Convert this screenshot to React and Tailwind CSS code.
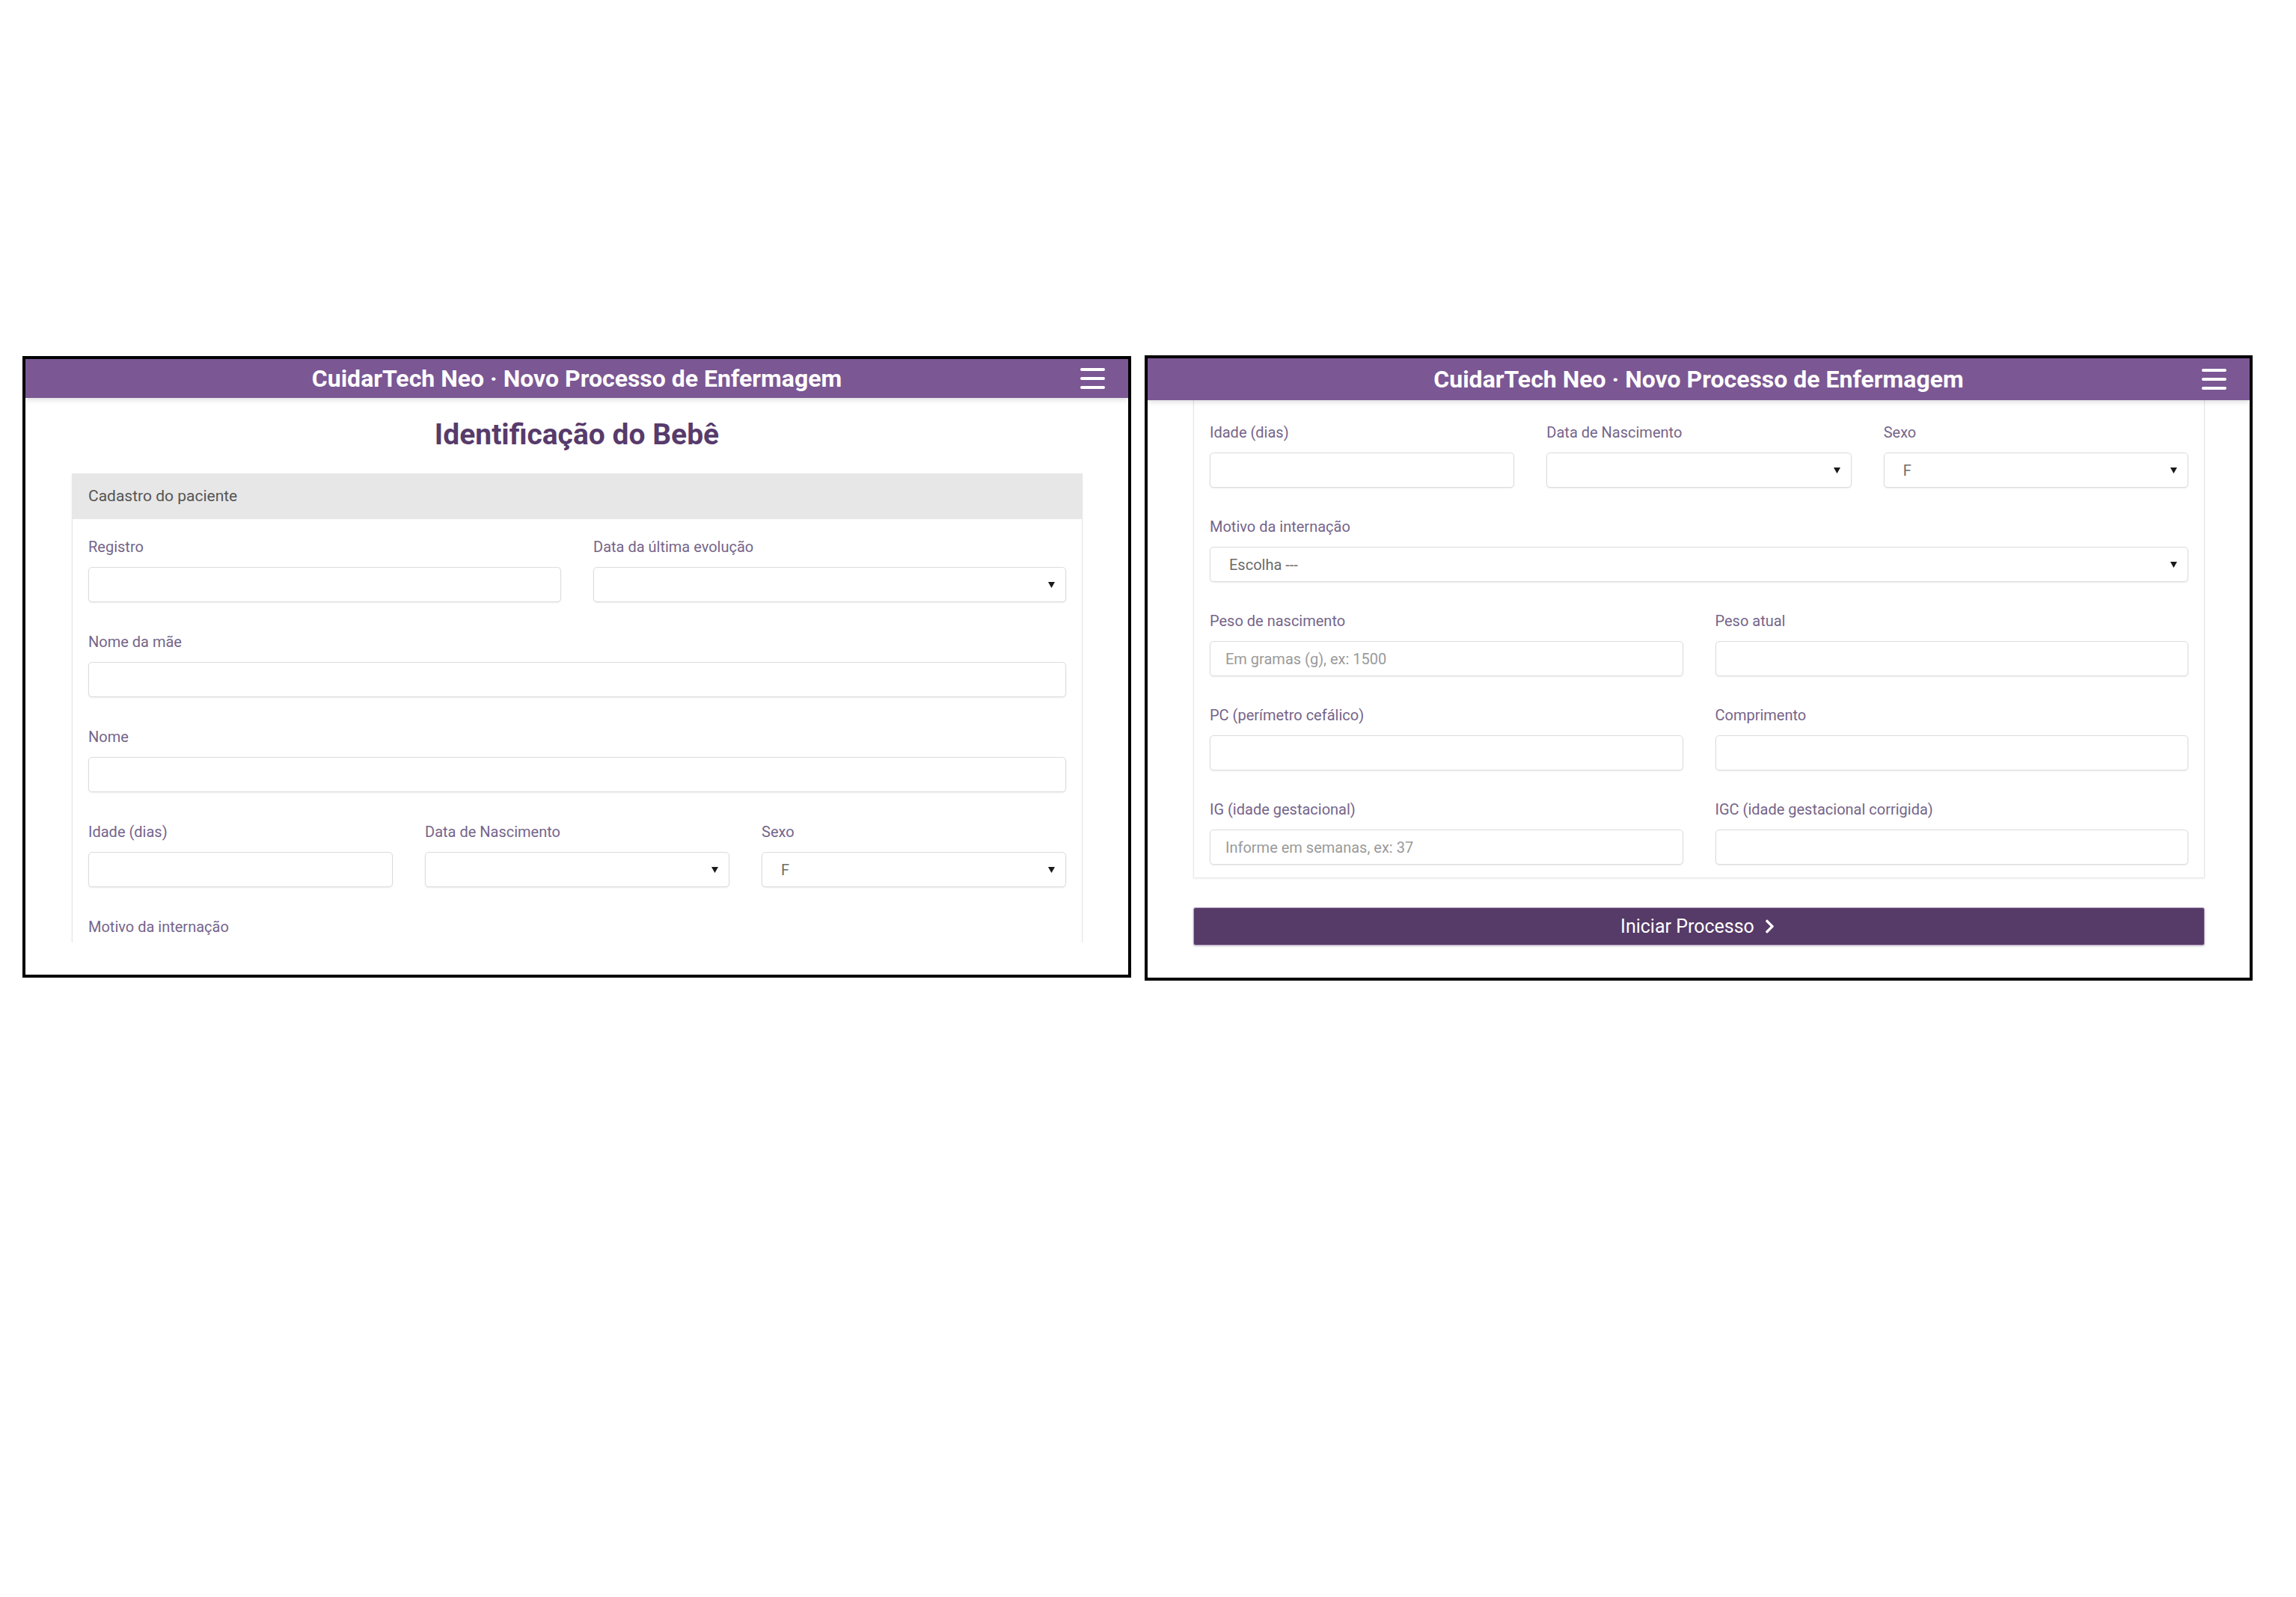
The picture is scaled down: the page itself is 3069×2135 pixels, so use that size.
import { FaChevronRight } from "react-icons/fa";

// small pieces shared by both screens
const Label = ({ children }) => (
  <div className="text-[20px] leading-[24px] text-[#75658a]">{children}</div>
);

const TextInput = ({ placeholder = "" }) => (
  <input
    type="text"
    placeholder={placeholder}
    className="mt-[15px] h-[47px] w-full rounded-[5px] border border-[#dcdcdc] bg-white pl-[20px] text-[20px] text-[#555] shadow-[0_1px_2px_rgba(0,0,0,0.08)] outline-none placeholder:text-[#9a9a9a]"
  />
);

const SelectBox = ({ value = "", pad = "pl-[25px]" }) => (
  <div
    className={`mt-[15px] flex h-[47px] w-full items-center justify-between rounded-[5px] border border-[#dcdcdc] bg-white ${pad} pr-[14px] text-[20px] text-[#6b6b6b] shadow-[0_1px_2px_rgba(0,0,0,0.08)]`}
  >
    <span>{value}</span>
    <svg width="9" height="8" viewBox="0 0 9 8">
      <path d="M0 0 H9 L4.5 8 Z" fill="#1a1a1a" />
    </svg>
  </div>
);

const Field = ({ label, children, mb = "mb-[40px]" }) => (
  <div className={mb}>
    <Label>{label}</Label>
    {children}
  </div>
);

const Header = ({ h }) => (
  <div
    className={`relative z-10 grid ${h} grid-cols-[1fr_auto_1fr] items-center bg-[#7b5794] shadow-[0_3px_6px_rgba(0,0,0,0.12)]`}
  >
    <div />
    <div className="text-[32px] font-bold text-white">
      CuidarTech Neo · Novo Processo de Enfermagem
    </div>
    <div className="flex justify-end pr-[31px]">
      <div className="flex flex-col gap-[8px]">
        <div className="h-[4px] w-[33px] rounded-full bg-white" />
        <div className="h-[4px] w-[33px] rounded-full bg-white" />
        <div className="h-[4px] w-[33px] rounded-full bg-white" />
      </div>
    </div>
  </div>
);

export default function App() {
  return (
    <div className="flex h-[2135px] w-[3069px] items-start gap-[18px] bg-white pl-[30px] pt-[476px] font-['Roboto',sans-serif]">
      {/* LEFT SCREEN */}
      <div className="flex h-[831px] w-[1482px] flex-col border-4 border-black bg-white">
        <Header h="h-[52px]" />

        <div className="h-[728px] overflow-hidden">
          <h1 className="mt-[26px] text-center text-[39px] font-bold leading-[46px] text-[#573b6b]">
            Identificação do Bebê
          </h1>

          <div className="ml-[62px] mr-[61px] mt-[29px] h-[700px] border border-[#e6e6e6] shadow-[0_1px_3px_rgba(0,0,0,0.06)]">
            <div className="flex h-[60px] items-center bg-[#e7e7e7] pl-[21px] text-[21px] text-[#555]">
              Cadastro do paciente
            </div>

            <div className="px-[21px] pt-[25px]">
              <div className="grid grid-cols-2 gap-x-[43px]">
                <Field label="Registro" mb="mb-[41px]">
                  <TextInput />
                </Field>
                <Field label="Data da última evolução" mb="mb-[41px]">
                  <SelectBox />
                </Field>
              </div>

              <Field label="Nome da mãe" mb="mb-[41px]">
                <TextInput />
              </Field>

              <Field label="Nome" mb="mb-[41px]">
                <TextInput />
              </Field>

              <div className="grid grid-cols-3 gap-x-[43px]">
                <Field label="Idade (dias)" mb="mb-[41px]">
                  <TextInput />
                </Field>
                <Field label="Data de Nascimento" mb="mb-[41px]">
                  <SelectBox />
                </Field>
                <Field label="Sexo" mb="mb-[41px]">
                  <SelectBox value="F" />
                </Field>
              </div>

              <Label>Motivo da internação</Label>
            </div>
          </div>
        </div>

        <div className="flex-1 bg-white" />
      </div>

      {/* RIGHT SCREEN */}
      <div className="-mt-[1px] flex h-[836px] w-[1481px] flex-col border-4 border-black bg-white">
        <Header h="h-[56px]" />

        <div className="ml-[61px] mr-[60px] border-x border-b border-[#e6e6e6] px-[21px] pb-[17px] pt-[31px] shadow-[0_1px_3px_rgba(0,0,0,0.06)]">
          <div className="grid grid-cols-3 gap-x-[43px]">
            <Field label="Idade (dias)">
              <TextInput />
            </Field>
            <Field label="Data de Nascimento">
              <SelectBox />
            </Field>
            <Field label="Sexo">
              <SelectBox value="F" />
            </Field>
          </div>

          <Field label="Motivo da internação">
            <SelectBox value="Escolha ---" pad="pl-[25px]" />
          </Field>

          <div className="grid grid-cols-2 gap-x-[43px]">
            <Field label="Peso de nascimento">
              <TextInput placeholder="Em gramas (g), ex: 1500" />
            </Field>
            <Field label="Peso atual">
              <TextInput />
            </Field>

            <Field label="PC (perímetro cefálico)">
              <TextInput />
            </Field>
            <Field label="Comprimento">
              <TextInput />
            </Field>

            <Field label="IG (idade gestacional)" mb="mb-0">
              <TextInput placeholder="Informe em semanas, ex: 37" />
            </Field>
            <Field label="IGC (idade gestacional corrigida)" mb="mb-0">
              <TextInput />
            </Field>
          </div>
        </div>

        <button className="ml-[61px] mr-[60px] mt-[39px] flex h-[51px] items-center justify-center gap-[10px] rounded-[3px] border border-[#b9a2c9] bg-[#563a68] text-[25px] text-white shadow-[0_1px_3px_rgba(0,0,0,0.2)]">
          Iniciar Processo
          <FaChevronRight className="h-[21px] w-[21px]" />
        </button>
      </div>
    </div>
  );
}
